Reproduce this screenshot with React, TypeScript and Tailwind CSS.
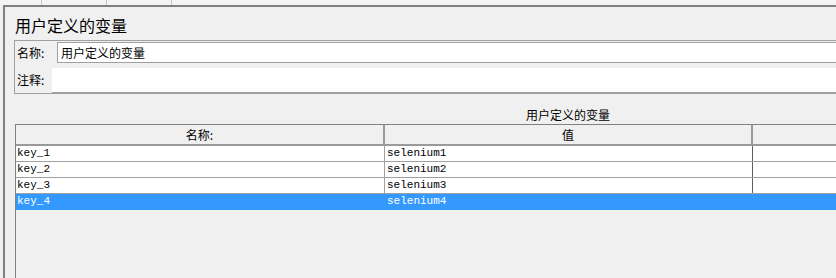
const rows = [
  { name: 'key_1', value: 'selenium1' },
  { name: 'key_2', value: 'selenium2' },
  { name: 'key_3', value: 'selenium3' },
  { name: 'key_4', value: 'selenium4' },
]

const cjk = 'font-["Noto_Sans_CJK_SC","Noto_Sans",sans-serif]'

export default function App() {
  const selected = 3

  return (
    <div className={`w-[836px] h-[278px] overflow-hidden bg-[#f0f0f0] text-black ${cjk}`}>
      {/* Top tab strip */}
      <div className="h-[5px] flex bg-[#f4f4f4]">
        <div className="w-[42px] border-r border-[#c8c8c8]" />
        <div className="w-[65px] border-r border-[#c8c8c8]" />
        <div className="w-[65px] border-r border-[#c8c8c8]" />
      </div>

      <div className="flex h-[273px]">
        <div className="w-[3px] shrink-0" />
        <div className="flex-1 border-l-2 border-t-2 border-[#808080] bg-[#f0f0f0] flex flex-col">
          {/* Title */}
          <div className="pl-[10px] pt-[8px] h-[33px] text-[16px] leading-[20px]">用户定义的变量</div>

          {/* Name / comment panel */}
          <div className="ml-[9px] h-[54px] border border-[#a0a0a0] border-r-0 flex flex-col">
            <div className="flex items-center h-[23px]">
              <span className="w-[42px] pl-[2px] text-[12px] leading-[14px]">名称:</span>
              <div className="flex-1 h-[21px] bg-white border border-[#a0a0a0] border-r-0 flex items-center pl-[3px] text-[12px]">
                用户定义的变量
              </div>
            </div>
            <div className="flex items-center flex-1 pt-[3px]">
              <span className="w-[37px] pl-[2px] text-[12px] leading-[14px]">注释:</span>
              <div className="flex-1 h-[25px] bg-white border-b border-[#a0a0a0]" />
            </div>
          </div>

          {/* Table caption */}
          <div className="h-[30px] flex items-end pb-[2px] pl-[521px] text-[12px] leading-[14px]">
            用户定义的变量
          </div>

          {/* Table */}
          <div className="ml-[10px] flex-1 border-l border-t border-[#808080] flex flex-col">
            <div className="flex h-[21px] bg-[#f0f0f0] border-b-2 border-[#9a9a9a] text-[12px]">
              <div className="w-[369px] border-r-2 border-[#9a9a9a] flex items-center justify-center">名称:</div>
              <div className="w-[368px] border-r-2 border-[#9a9a9a] flex items-center justify-center">值</div>
              <div className="flex-1" />
            </div>
            {rows.map((r, i) => {
              const sel = i === selected
              return (
                <div
                  key={r.name}
                  className={`flex h-[16px] text-[11px] leading-[15px] font-["Liberation_Mono",monospace] ${
                    sel ? 'bg-[#3399ff] text-white' : 'bg-white border-b border-[#a0a0a0]'
                  }`}
                >
                  <div className={`w-[369px] pl-[1px] ${sel ? '' : 'border-r border-[#a0a0a0]'}`}>{r.name}</div>
                  <div className={`w-[368px] pl-[2px] ${sel ? '' : 'border-r border-[#606060]'}`}>{r.value}</div>
                  <div className="flex-1" />
                </div>
              )
            })}
            <div className="flex-1 bg-[#f0f0f0]" />
          </div>
        </div>
      </div>
    </div>
  )
}
